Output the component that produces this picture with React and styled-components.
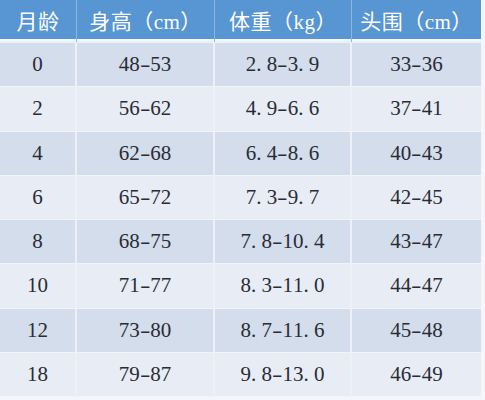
import React from 'react'
import styled, { createGlobalStyle } from 'styled-components'

const GlobalStyle = createGlobalStyle`
  html, body {
    margin: 0;
    padding: 0;
    background: #f4f6fa;
  }
`

const Table = styled.div`
  display: grid;
  grid-template-columns: 77px 138px 137px 129px;
  width: 481px;
  font-family: 'Liberation Serif', 'Noto Sans CJK SC', serif;
`

const HeadCell = styled.div`
  box-sizing: border-box;
  height: 43px;
  display: flex;
  align-items: center;
  justify-content: center;
  padding-bottom: 2px;
  background: #5795d3;
  background-clip: content-box;
  border-right: ${({ $last }) => ($last ? 'none' : '1px solid #8ab6e2')};
  border-bottom: 2px solid #eaf1f9;
  color: #ffffff;
  font-size: 21px;
  letter-spacing: 0.5px;
`

const Cell = styled.div`
  box-sizing: border-box;
  height: 44.25px;
  display: flex;
  align-items: center;
  justify-content: center;
  background: ${({ $alt }) => ($alt ? '#e8edf5' : '#d3ddeb')};
  border-right: ${({ $last }) => ($last ? 'none' : '2px solid #edf1f7')};
  border-bottom: 1px solid #f1f4f9;
  color: #2a2c35;
  font-size: 21px;
`

// half-width cells, like the SimSun digits in the picture
const Half = styled.span`
  display: inline-block;
  width: 0.5em;
  text-align: ${({ $dot }) => ($dot ? 'left' : 'center')};
  transform: ${({ $dash }) => ($dash ? 'scaleX(1.5)' : 'none')};
`

const headers = ['月龄', '身高（cm）', '体重（kg）', '头围（cm）']

const rows = [
  ['0', '48-53', '2.8-3.9', '33-36'],
  ['2', '56-62', '4.9-6.6', '37-41'],
  ['4', '62-68', '6.4-8.6', '40-43'],
  ['6', '65-72', '7.3-9.7', '42-45'],
  ['8', '68-75', '7.8-10.4', '43-47'],
  ['10', '71-77', '8.3-11.0', '44-47'],
  ['12', '73-80', '8.7-11.6', '45-48'],
  ['18', '79-87', '9.8-13.0', '46-49'],
]

function Value({ text }) {
  return (
    <span>
      {text.split('').map((ch, i) => (
        <Half key={i} $dot={ch === '.'} $dash={ch === '-'}>{ch}</Half>
      ))}
    </span>
  )
}

export default function App() {
  return (
    <>
      <GlobalStyle />
      <Table>
        {headers.map((h, i) => (
          <HeadCell key={h} $last={i === headers.length - 1}>{h}</HeadCell>
        ))}
        {rows.map((row, r) =>
          row.map((v, c) => (
            <Cell key={r + '-' + c} $alt={r % 2 === 1} $last={c === row.length - 1}>
              <Value text={v} />
            </Cell>
          ))
        )}
      </Table>
    </>
  )
}
